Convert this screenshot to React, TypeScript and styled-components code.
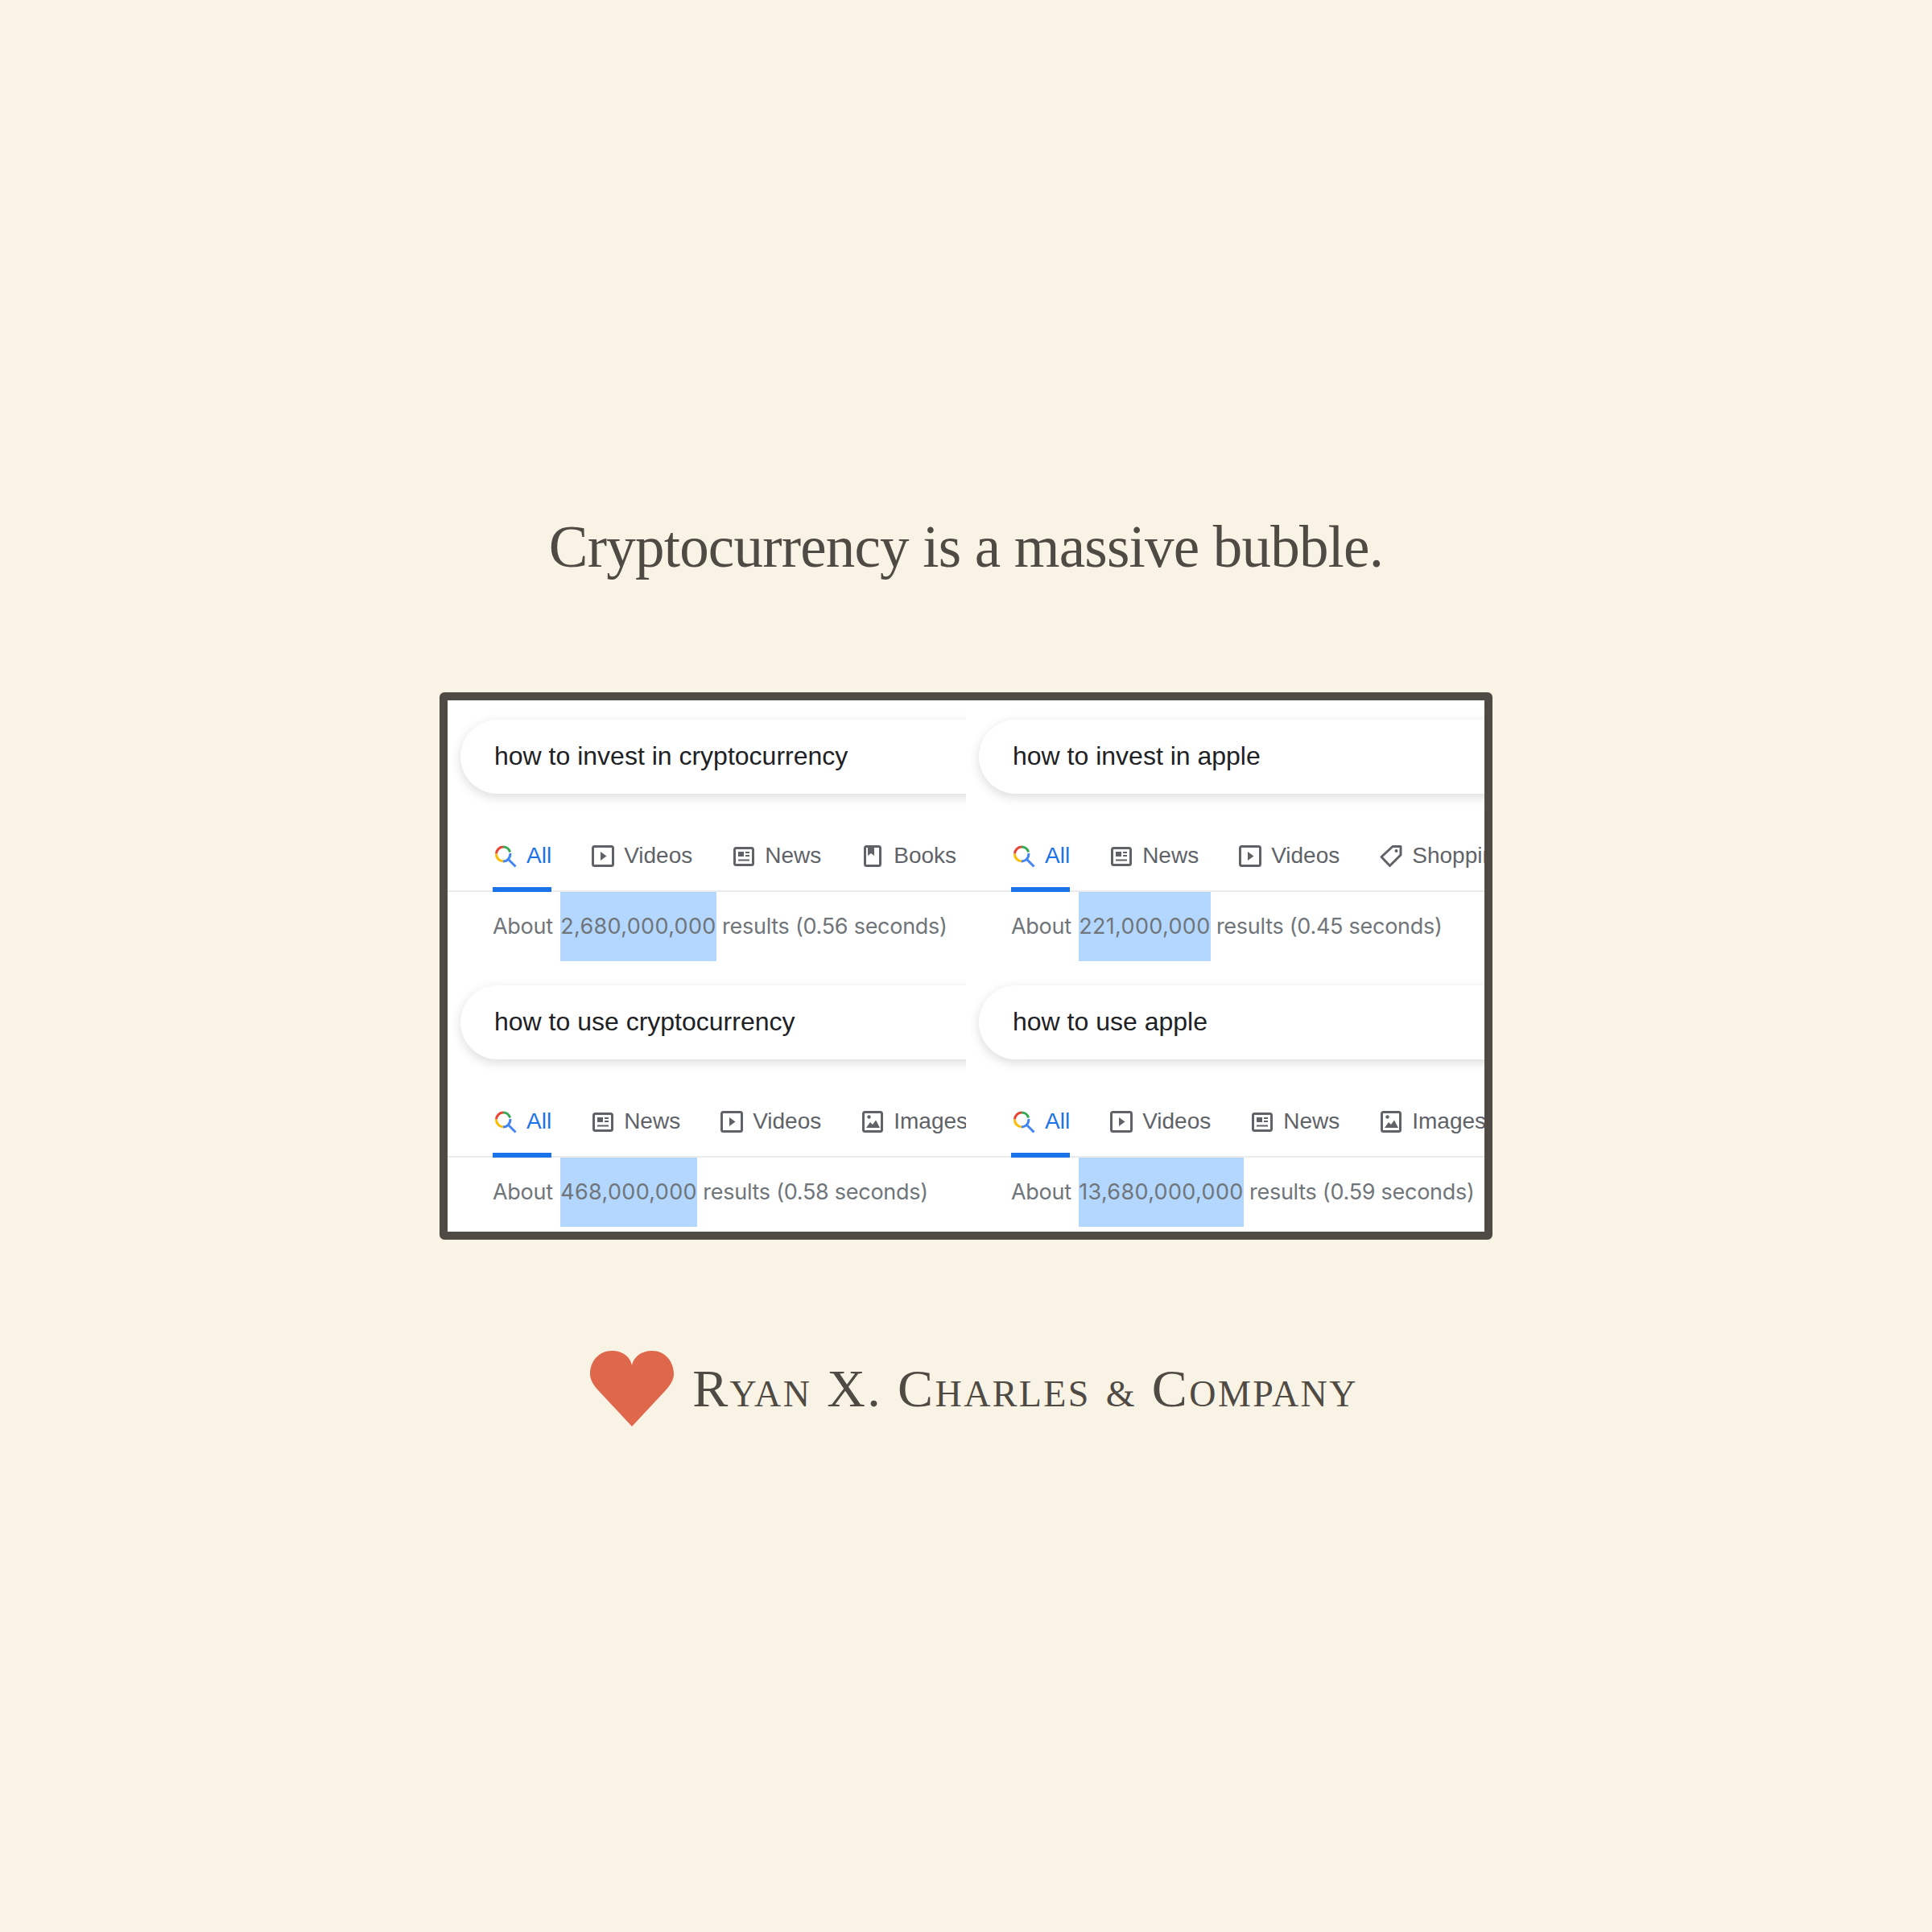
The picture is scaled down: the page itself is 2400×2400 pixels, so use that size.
import { FC } from "react";
import styled, { createGlobalStyle } from "styled-components";

const GlobalStyle = createGlobalStyle`
  html, body {
    margin: 0;
    padding: 0;
    background: #f9f3e5;
  }
`;

type TabKind = "all" | "videos" | "news" | "books" | "shopping" | "images";

type Search = {
  query: string;
  tabs: TabKind[];
  count: string;
  time: string;
};

const searches: Search[] = [
  { query: "how to invest in cryptocurrency", tabs: ["all", "videos", "news", "books"], count: "2,680,000,000", time: "0.56" },
  { query: "how to invest in apple", tabs: ["all", "news", "videos", "shopping"], count: "221,000,000", time: "0.45" },
  { query: "how to use cryptocurrency", tabs: ["all", "news", "videos", "images"], count: "468,000,000", time: "0.58" },
  { query: "how to use apple", tabs: ["all", "videos", "news", "images"], count: "13,680,000,000", time: "0.59" },
];

const labels: Record<TabKind, string> = {
  all: "All",
  videos: "Videos",
  news: "News",
  books: "Books",
  shopping: "Shopping",
  images: "Images",
};

const TabIcon: FC<{ kind: TabKind }> = ({ kind }) => {
  if (kind === "all") {
    return (
      <Icon viewBox="0 0 32 32" fill="none" strokeWidth="3">
        <path d="M4.5 14.5 A 9 9 0 0 1 13 6" stroke="#ea4335" />
        <path d="M13 6 A 9 9 0 0 1 21.6 12.5" stroke="#34a853" />
        <path d="M4.5 14.5 A 9 9 0 0 0 13 24" stroke="#fbbc05" />
        <path d="M13 24 A 9 9 0 0 0 21.8 14" stroke="#4285f4" />
        <path d="M19.5 21.5 L28.5 30.5" stroke="#4285f4" />
      </Icon>
    );
  }
  if (kind === "videos") {
    return (
      <Icon viewBox="0 0 32 32" fill="none" stroke="#5f6368" strokeWidth="3">
        <rect x="3.5" y="5.5" width="25" height="24" rx="2" />
        <path d="M13 12 L20.5 17.5 L13 23 Z" fill="#5f6368" stroke="none" />
      </Icon>
    );
  }
  if (kind === "news") {
    return (
      <Icon viewBox="0 0 32 32" fill="none" stroke="#5f6368" strokeWidth="3">
        <rect x="4.5" y="7.5" width="23" height="21" rx="2" />
        <path d="M9 12 H16 V18 H9 Z" fill="#5f6368" stroke="none" />
        <path d="M18 13 H23 M18 17 H23 M9 22.5 H23" strokeWidth="2" />
      </Icon>
    );
  }
  if (kind === "books") {
    return (
      <Icon viewBox="0 0 32 32" fill="none" stroke="#5f6368" strokeWidth="3">
        <rect x="6.5" y="5.5" width="19" height="24" rx="2" />
        <path d="M10 5 H18 V17 L14 14 L10 17 Z" fill="#5f6368" stroke="none" />
      </Icon>
    );
  }
  if (kind === "images") {
    return (
      <Icon viewBox="0 0 32 32" fill="none" stroke="#5f6368" strokeWidth="3">
        <rect x="4.5" y="5.5" width="23" height="24" rx="2" />
        <circle cx="11.5" cy="11.5" r="2.2" fill="#5f6368" stroke="none" />
        <path d="M8 25 L13 18 L16 21 L20 15.5 L25 25 Z" fill="#5f6368" stroke="none" />
      </Icon>
    );
  }
  return (
    <Icon viewBox="0 0 32 32" fill="none" stroke="#5f6368" strokeWidth="3" strokeLinejoin="round">
      <path d="M18 5.5 H28 V16 L14.5 29.5 L4 18.5 Z" />
      <circle cx="22.5" cy="11" r="2" fill="#5f6368" stroke="none" />
    </Icon>
  );
};

const App: FC = () => (
  <Page>
    <GlobalStyle />
    <Headline>Cryptocurrency is a massive bubble.</Headline>
    <Frame>
      {searches.map((s) => (
        <Cell key={s.query}>
          <SearchBar>{s.query}</SearchBar>
          <Tabs>
            {s.tabs.map((t) => (
              <Tab key={t} $active={t === "all"}>
                <TabIcon kind={t} />
                <TabLabel $active={t === "all"}>{labels[t]}</TabLabel>
              </Tab>
            ))}
          </Tabs>
          <Stats>
            About <Count>{s.count}</Count> results ({s.time} seconds)
          </Stats>
        </Cell>
      ))}
    </Frame>
    <Brand>
      <svg width="104" height="94" viewBox="0 0 104 94">
        <path
          d="M52 18 C50 8 41 0 27 0 C11 0 0 13 0 29 C0 36 4 42 10 49 L52 94 L94 49 C100 42 104 36 104 29 C104 13 93 0 77 0 C63 0 54 8 52 18 Z"
          fill="#df674c"
        />
      </svg>
      <BrandName>
        Ryan X. Charles <Amp>&amp;</Amp> Company
      </BrandName>
    </Brand>
  </Page>
);

export default App;

const Page = styled.div`
  width: 2400px;
  height: 2400px;
  box-sizing: border-box;
  padding-top: 640px;
  display: flex;
  flex-direction: column;
  align-items: center;
  background: #f9f3e5;
`;

const Headline = styled.h1`
  margin: 0;
  height: 220px;
  font-family: "Liberation Serif", serif;
  font-weight: 400;
  font-size: 73px;
  line-height: 80px;
  letter-spacing: -0.8px;
  color: #4f4a43;
  white-space: nowrap;
`;

const Frame = styled.div`
  width: 1288px;
  display: grid;
  grid-template-columns: repeat(2, 644px);
  grid-auto-rows: 330px;
  background: #ffffff;
  border: 10px solid #4f4a43;
  border-radius: 6px;
`;

const Cell = styled.div`
  overflow: hidden;
  padding-top: 24px;
  box-sizing: border-box;
`;

const SearchBar = styled.div`
  width: 800px;
  height: 92px;
  margin-left: 16px;
  padding-left: 42px;
  box-sizing: border-box;
  border-radius: 46px;
  background: #ffffff;
  box-shadow: 0 4px 12px 1px rgba(64, 60, 67, 0.16);
  font-family: "Liberation Sans", Arial, sans-serif;
  font-size: 32px;
  line-height: 90px;
  color: #202124;
  white-space: nowrap;
`;

const Tabs = styled.div`
  display: flex;
  gap: 48px;
  margin-top: 36px;
  padding-left: 56px;
  box-shadow: inset 0 -2px 0 #ebebeb;
  white-space: nowrap;
`;

const Tab = styled.div<{ $active?: boolean }>`
  display: flex;
  align-items: center;
  gap: 10px;
  height: 80px;
  border-bottom: 6px solid ${(p) => (p.$active ? "#1a73e8" : "transparent")};
`;

const Icon = styled.svg`
  flex: none;
  width: 32px;
  height: 32px;
`;

const TabLabel = styled.span<{ $active?: boolean }>`
  padding-top: 2px;
  font-family: "Liberation Sans", Arial, sans-serif;
  font-size: 28px;
  color: ${(p) => (p.$active ? "#1a73e8" : "#5f6368")};
`;

const Stats = styled.div`
  height: 86px;
  padding-left: 56px;
  font-family: Inter, Roboto, sans-serif;
  font-size: 27px;
  line-height: 86px;
  letter-spacing: -0.27px;
  color: #70757a;
  white-space: nowrap;
`;

const Count = styled.span`
  display: inline-block;
  height: 86px;
  margin-left: 2px;
  letter-spacing: 0.35px;
  background: #b3d7ff;
`;

const Brand = styled.div`
  display: flex;
  align-items: flex-start;
  gap: 23px;
  margin-top: 138px;
  padding-left: 20px;
`;

const BrandName = styled.div`
  font-family: "Liberation Serif", serif;
  font-variant: small-caps;
  font-size: 66px;
  line-height: 94px;
  letter-spacing: 2.4px;
  color: #4f4a43;
  white-space: nowrap;
`;

const Amp = styled.span`
  font-size: 46px;
`;
